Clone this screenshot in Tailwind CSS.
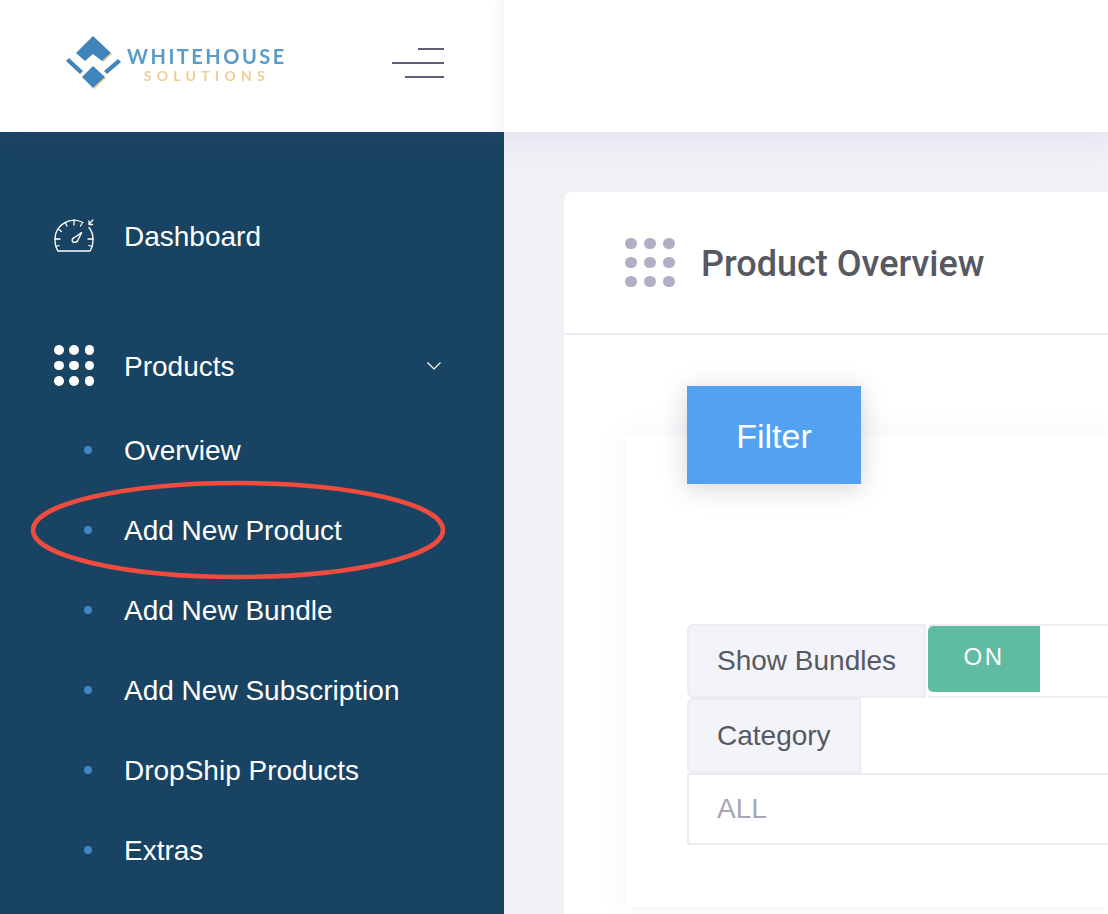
<!DOCTYPE html>
<html lang="en">
<head>
    <meta charset="UTF-8">
    <title>Product Overview</title>
    <script src="https://cdn.jsdelivr.net/npm/@tailwindcss/browser@4"></script>
</head>
<body class="h-[914px] w-[1108px] overflow-hidden bg-[#f0f1f7] font-['Liberation_Sans',sans-serif]">
    <!-- Top bar -->
    <header class="relative z-10 flex h-[132px] bg-white shadow-[0_4px_30px_rgba(90,90,130,0.12)]">
        <div class="flex w-[504px] items-center justify-between pb-[6px] pl-[64px] pr-[60px] shadow-[inset_-14px_0_14px_-10px_rgba(90,90,130,0.07)]">
            <div class="flex items-center gap-[3px] pb-[4px] blur-[0.6px]">
                <svg width="60" height="56" viewBox="0 0 60 56">
                    <path d="M29 3 L47 20 L38 28 L29 21 L21 28 L12 20 Z" fill="#3f84bb"/>
                    <path d="M2 28 L5 25 L19 38 L16 41 Z" fill="#3f84bb"/>
                    <path d="M40 38 L54 26 L57 29 L43 41 Z" fill="#3f84bb"/>
                    <path d="M29 33 L41 44 L29 55 L18 44 Z" fill="#3f84bb"/>
                    <path d="M41 44 L29 55 L30 56 L42 45 Z M47 20 L38 28 L39 29 L48 21 Z" fill="#eec57a"/>
                </svg>
                <div class="flex flex-col items-center pt-[7px]">
                    <span class="font-['Lato',sans-serif] text-[20px] leading-[22px] font-bold tracking-[2.5px] text-[#5b9bca]">WHITEHOUSE</span>
                    <span class="font-['Lato',sans-serif] text-[14px] leading-[18px] font-bold tracking-[5.3px] text-[#efcd92]">SOLUTIONS</span>
                </div>
            </div>
            <div class="flex w-[52px] flex-col items-end gap-[12px]">
                <div class="h-[2px] w-[26px] bg-[#5f617c]"></div>
                <div class="h-[2px] w-[52px] bg-[#5f617c]"></div>
                <div class="h-[2px] w-[39px] bg-[#5f617c]"></div>
            </div>
        </div>
    </header>

    <div class="flex h-[782px]">
        <!-- Sidebar -->
        <nav class="w-[504px] shrink-0 bg-[#194362] pt-[84px] pl-[52px] text-[28px] text-white">
            <div class="flex h-[40px] items-center gap-[28px]">
                <svg width="44" height="36" viewBox="0 0 44 36" fill="none" stroke="white" stroke-width="1.3" stroke-linecap="round" stroke-linejoin="round">
                    <path d="M6 33 C4 30 3 27 3 21 A19 19 0 0 1 31 4.5"/>
                    <path d="M37 9.5 A19 19 0 0 1 41 21 C41 27 40 30 38 33 H6"/>
                    <path d="M22 2 V7 M13 4.5 L15 8 M6 11 L9.5 13.5 M3 21 H8 M36 21 H41 M28.5 8 L30 5.5 M4 28.5 L7 27.5 M40 28.5 L37 27.5"/>
                    <path d="M29.6 14.6 L25.5 23 C24 24.8 21.5 24.8 20.5 23.5 C19.5 22 20.5 20 22.5 19.5 Z"/>
                    <path d="M41 2 L37 6 M37 3 V6.5 H40.5"/>
                </svg>
                <span class="pt-[2px]">Dashboard</span>
            </div>
            <div class="mt-[90px] flex h-[40px] items-center">
                <div class="ml-[2px] -mt-[1px] grid w-[40px] grid-cols-3 gap-[6px]">
                    <div class="size-[9.5px] rounded-full bg-white"></div><div class="size-[9.5px] rounded-full bg-white"></div><div class="size-[9.5px] rounded-full bg-white"></div>
                    <div class="size-[9.5px] rounded-full bg-white"></div><div class="size-[9.5px] rounded-full bg-white"></div><div class="size-[9.5px] rounded-full bg-white"></div>
                    <div class="size-[9.5px] rounded-full bg-white"></div><div class="size-[9.5px] rounded-full bg-white"></div><div class="size-[9.5px] rounded-full bg-white"></div>
                </div>
                <span class="ml-[30px] pt-[2px]">Products</span>
                <svg class="ml-[191px]" width="16" height="10" viewBox="0 0 16 10" fill="none" stroke="white" stroke-width="1.2"><path d="M1.5 1.5 L8 8 L14.5 1.5"/></svg>
            </div>
            <ul class="mt-[24px] pl-[32px]">
                <li class="flex h-[80px] items-center gap-[32px]"><span class="size-2 rounded-full bg-[#3f86c1]"></span><span class="pt-[2px]">Overview</span></li>
                <li class="flex h-[80px] items-center gap-[32px]"><span class="size-2 rounded-full bg-[#3f86c1]"></span><span class="pt-[2px]">Add New Product</span></li>
                <li class="flex h-[80px] items-center gap-[32px]"><span class="size-2 rounded-full bg-[#3f86c1]"></span><span class="pt-[2px]">Add New Bundle</span></li>
                <li class="flex h-[80px] items-center gap-[32px]"><span class="size-2 rounded-full bg-[#3f86c1]"></span><span class="pt-[2px]">Add New Subscription</span></li>
                <li class="flex h-[80px] items-center gap-[32px]"><span class="size-2 rounded-full bg-[#3f86c1]"></span><span class="pt-[2px]">DropShip Products</span></li>
                <li class="flex h-[80px] items-center gap-[32px]"><span class="size-2 rounded-full bg-[#3f86c1]"></span><span class="pt-[2px]">Extras</span></li>
            </ul>
        </nav>

        <!-- Main -->
        <main class="flex-1 overflow-hidden pt-[60px] pl-[60px]">
            <section class="h-[800px] rounded-tl-[8px] bg-white">
                <div class="flex h-[143px] items-center gap-[26px] border-b-2 border-[#ebedf2] pl-[61px]">
                    <div class="grid w-[50px] grid-cols-3 gap-[7.5px]">
                        <div class="size-[11.5px] rounded-full bg-[#b1afc6]"></div><div class="size-[11.5px] rounded-full bg-[#b1afc6]"></div><div class="size-[11.5px] rounded-full bg-[#b1afc6]"></div>
                        <div class="size-[11.5px] rounded-full bg-[#b1afc6]"></div><div class="size-[11.5px] rounded-full bg-[#b1afc6]"></div><div class="size-[11.5px] rounded-full bg-[#b1afc6]"></div>
                        <div class="size-[11.5px] rounded-full bg-[#b1afc6]"></div><div class="size-[11.5px] rounded-full bg-[#b1afc6]"></div><div class="size-[11.5px] rounded-full bg-[#b1afc6]"></div>
                    </div>
                    <h1 class="pt-[2px] font-['Roboto',sans-serif] text-[36px] font-medium text-[#575962]">Product Overview</h1>
                </div>
                <div class="ml-[62px] mt-[100px] h-[471px] bg-white pl-[61px] shadow-[0_0_30px_rgba(90,90,130,0.07)]">
                    <button class="relative -top-[49px] flex h-[98px] w-[174px] items-center justify-center bg-[#53a2f2] pt-[2px] text-[34px] text-white shadow-[0_4px_24px_rgba(60,60,90,0.22)]">Filter</button>
                    <div class="mt-[91px] w-[600px] text-[28px] text-[#575962]">
                        <div class="flex h-[74px]">
                            <div class="flex w-[239px] items-center rounded-l-[6px] border-2 border-[#ebedf2] bg-[#f3f4f9] pl-[28px]">Show Bundles</div>
                            <div class="flex flex-1 rounded-l-[6px] border-2 border-l-white border-[#ebedf2]">
                                <div class="flex h-[66px] w-[112px] items-center justify-center rounded-l-[5px] bg-[#60bca0] pb-[4px] text-[24px] tracking-[2.5px] text-white">ON</div>
                            </div>
                        </div>
                        <div class="flex h-[75px]">
                            <div class="flex w-[174px] items-center rounded-l-[6px] border-2 border-[#ebedf2] bg-[#f3f4f9] pl-[28px]">Category</div>
                        </div>
                        <div class="flex h-[72px] items-center border-2 border-[#ebedf2] pl-[28px] text-[#a6a7b2]">ALL</div>
                    </div>
                </div>
            </section>
        </main>
    </div>

    <!-- Red annotation ellipse -->
    <svg class="absolute top-[480px] left-[30px]" width="418" height="100" viewBox="0 0 418 100" fill="none">
        <ellipse cx="208" cy="50" rx="205" ry="47" stroke="#ef4c3e" stroke-width="4.5"/>
    </svg>
</body>
</html>
